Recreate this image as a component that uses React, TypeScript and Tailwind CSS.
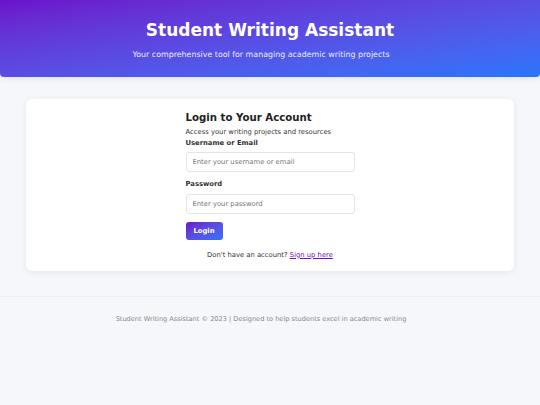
import React from 'react';

export default function App() {
  return (
    <div
      className="min-h-[405px] bg-[#f5f7fa] text-[#333]"
      style={{ fontFamily: '"DejaVu Sans", Verdana, sans-serif' }}
    >
      {/* ── Header ── */}
      <header className="h-[77px] rounded-b-[4px] bg-gradient-to-br from-[#6a11cb] to-[#2575fc] text-white text-center flex flex-col items-center pt-[22px] shadow-[0_2px_6px_rgba(0,0,0,0.08)]">
        <h1 className="text-[17px] font-bold leading-none">Student Writing Assistant</h1>
        <p className="mt-[12px] pr-[18px] text-[7.9px] opacity-90 leading-none">
          Your comprehensive tool for managing academic writing projects
        </p>
      </header>

      {/* ── Login card ── */}
      <main className="px-[26px] pt-[22px]">
        <div className="bg-white rounded-[6px] shadow-[0_1px_6px_rgba(0,0,0,0.08)] pt-[14px] pb-[13px]">
          <div className="w-[169px] mx-auto">
            <h2 className="text-[10.2px] font-bold leading-none text-[#222]">Login to Your Account</h2>
            <p className="mt-[6px] text-[6.8px] leading-none text-[#333]">Access your writing projects and resources</p>

            <label className="block mt-[4px] text-[6.8px] font-bold leading-none text-[#333]">Username or Email</label>
            <input
              className="mt-[5px] w-full h-[20px] border border-[#e1e4e8] rounded-[3px] px-[6px] text-[6.8px] outline-none placeholder:text-[#757575]"
              placeholder="Enter your username or email"
            />

            <label className="block mt-[9px] text-[6.8px] font-bold leading-none text-[#333]">Password</label>
            <input
              type="password"
              className="mt-[6px] w-full h-[20px] border border-[#e1e4e8] rounded-[3px] px-[6px] text-[6.8px] outline-none placeholder:text-[#757575]"
              placeholder="Enter your password"
            />

            <button className="mt-[8px] h-[18px] px-[8px] rounded-[3px] bg-gradient-to-br from-[#6a11cb] to-[#2575fc] text-white text-[6.8px] font-bold">
              Login
            </button>

            <p className="mt-[12px] text-center text-[6.8px] leading-none text-[#333]">
              Don't have an account?{' '}
              <a href="#" className="text-[#6a11cb] underline">Sign up here</a>
            </p>
          </div>
        </div>
      </main>

      {/* ── Footer ── */}
      <footer className="mt-[25px] border-t border-[#eceef2] pt-[19px] pr-[18px] text-center text-[6.6px] text-[#888] leading-none">
        Student Writing Assistant © 2023 | Designed to help students excel in academic writing
      </footer>
    </div>
  );
}
